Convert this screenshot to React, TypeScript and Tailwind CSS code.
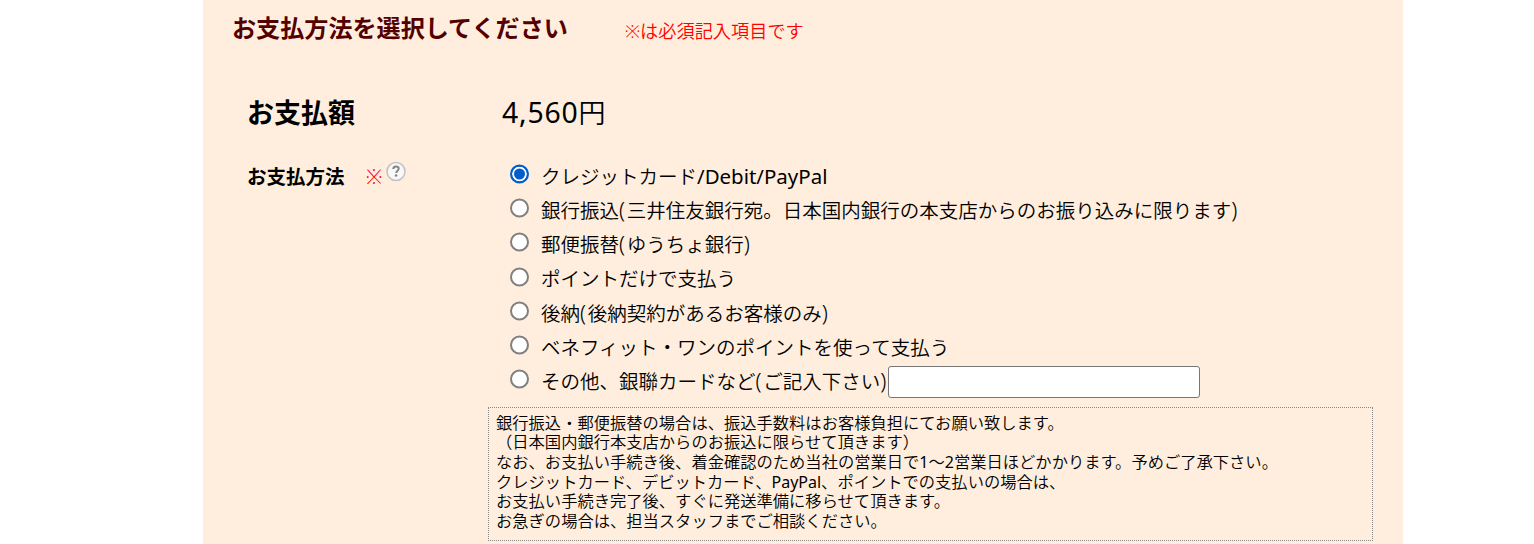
import { useState } from "react";

const METHODS = [
  "クレジットカード/Debit/PayPal",
  "銀行振込(三井住友銀行宛。日本国内銀行の本支店からのお振り込みに限ります)",
  "郵便振替(ゆうちょ銀行)",
  "ポイントだけで支払う",
  "後納(後納契約があるお客様のみ)",
  "ベネフィット・ワンのポイントを使って支払う",
  "その他、銀聯カードなど(ご記入下さい)",
];

const NOTES = [
  "銀行振込・郵便振替の場合は、振込手数料はお客様負担にてお願い致します。",
  "（日本国内銀行本支店からのお振込に限らせて頂きます）",
  "なお、お支払い手続き後、着金確認のため当社の営業日で1～2営業日ほどかかります。予めご了承下さい。",
  "クレジットカード、デビットカード、PayPal、ポイントでの支払いの場合は、",
  "お支払い手続き完了後、すぐに発送準備に移らせて頂きます。",
  "お急ぎの場合は、担当スタッフまでご相談ください。",
];

/** Latin runs are set slightly larger than the kana around them. */
function Mixed({ text, latin = "text-[1.05em]" }: { text: string; latin?: string }) {
  return (
    <span className="whitespace-nowrap">
      {text.split(/([()]|[A-Za-z0-9/,]+)/).map((part, i) => {
        if (/^[()]$/.test(part)) {
          return (
            <span key={i} className="text-[1.12em] leading-none font-light tracking-[0.08em]">
              {part}
            </span>
          );
        }
        if (/^[A-Za-z0-9/,]+$/.test(part)) {
          return (
            <span key={i} className={`leading-none font-normal ${latin}`}>
              {part}
            </span>
          );
        }
        return part;
      })}
    </span>
  );
}

function HelpIcon() {
  return (
    <svg viewBox="0 0 20 20" className="ml-[4px] size-5 -translate-y-[4.5px]">
      <circle cx="10" cy="10" r="9" fill="#f8f8f8" stroke="#c4c4c4" strokeWidth="1.6" />
      <path
        d="M7.3 7.6C7.3 5.9 8.5 5.1 10 5.1s2.7.8 2.7 2.2c0 1.9-2.5 2-2.5 4.1"
        fill="none"
        stroke="#858585"
        strokeWidth="2"
      />
      <circle cx="10.1" cy="14" r="1.3" fill="#858585" />
    </svg>
  );
}

export default function App() {
  const [method, setMethod] = useState(0);

  return (
    <div className="ml-[203px] h-[544px] w-[1200px] overflow-hidden bg-[#ffeedd] font-['Noto_Sans','Noto_Sans_CJK_JP',sans-serif] font-[350] text-black">
      <div className="flex h-[56px] items-center pl-[29px]">
        <h1 className="w-[393px] text-[24.1px] font-bold text-[#550000]">
          お支払方法を選択してください
        </h1>
        <span className="pt-[7px] text-[18.2px] text-[#ff0000]">※は必須記入項目です</span>
      </div>

      <div className="mt-[34px] flex h-[46px] items-center pl-[44px] text-[27px]">
        <span className="w-[255px] font-bold">お支払額</span>
        <span className="tracking-[0.8px]">
          <Mixed text="4,560円" />
        </span>
      </div>

      <div className="mt-[23.4px] flex pl-[44px] text-[19.5px]">
        <div className="flex h-[34px] w-[263px] items-center">
          <span className="w-[119px] font-bold">お支払方法</span>
          <span className="text-[#ff0000]">※</span>
          <HelpIcon />
        </div>
        <div>
          {METHODS.map((m, i) => (
            <div key={m} className="flex h-[34.2px] items-center">
              <label className="flex items-center">
                <input
                  type="radio"
                  name="method"
                  checked={method === i}
                  onChange={() => setMethod(i)}
                  className="mr-[12px] size-[19px] flex-none -translate-y-[2.5px] appearance-none rounded-full border-2 border-[#808080] bg-white checked:border-[#005fcc] checked:bg-[#005fcc] checked:shadow-[inset_0_0_0_2px_#fff]"
                />
                <Mixed text={m} />
              </label>
              {i === METHODS.length - 1 && (
                <input
                  type="text"
                  className="h-[32px] w-[312px] rounded-[3px] border border-[#767676] bg-white px-1"
                />
              )}
            </div>
          ))}
        </div>
      </div>

      <div className="mt-[8.2px] ml-[285px] h-[134px] w-[885px] border border-dotted border-[#888] px-[7px] py-[6px] text-[16.3px] leading-[19.6px]">
        {NOTES.map((n) => (
          <p key={n}>
            <Mixed text={n} latin="text-[16px]" />
          </p>
        ))}
      </div>
    </div>
  );
}
